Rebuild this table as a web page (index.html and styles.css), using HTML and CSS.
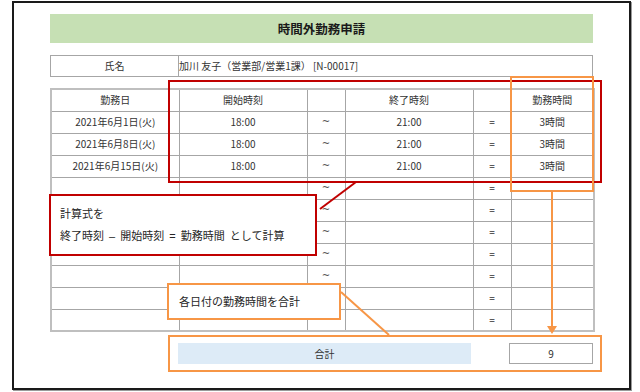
FILE: index.html
```html
<!DOCTYPE html>
<html lang="ja">
<head>
<meta charset="utf-8">
<link rel="stylesheet" href="styles.css">
</head>
<body>
<div class="frame">
  <div class="sheet">
    <div class="title">時間外勤務申請</div>
    <table class="name-table">
      <tr><td class="name-label">氏名</td><td class="name-value">加川 友子（営業部/営業1課） [N-00017]</td></tr>
    </table>
    <table class="grid">
      <colgroup><col class="c1"><col class="c2"><col class="c3"><col class="c4"><col class="c5"><col class="c6"></colgroup>
      <tr><td>勤務日</td><td>開始時刻</td><td></td><td>終了時刻</td><td></td><td>勤務時間</td></tr>
      <tr><td>2021年6月1日(火)</td><td>18:00</td><td class="tilde">~</td><td>21:00</td><td>=</td><td>3時間</td></tr>
      <tr><td>2021年6月8日(火)</td><td>18:00</td><td class="tilde">~</td><td>21:00</td><td>=</td><td>3時間</td></tr>
      <tr><td>2021年6月15日(火)</td><td>18:00</td><td class="tilde">~</td><td>21:00</td><td>=</td><td>3時間</td></tr>
      <tr><td></td><td></td><td class="tilde">~</td><td></td><td>=</td><td></td></tr>
      <tr><td></td><td></td><td class="tilde">~</td><td></td><td>=</td><td></td></tr>
      <tr><td></td><td></td><td class="tilde">~</td><td></td><td>=</td><td></td></tr>
      <tr><td></td><td></td><td class="tilde">~</td><td></td><td>=</td><td></td></tr>
      <tr><td></td><td></td><td class="tilde">~</td><td></td><td>=</td><td></td></tr>
      <tr><td></td><td></td><td class="tilde">~</td><td></td><td>=</td><td></td></tr>
      <tr><td></td><td></td><td class="tilde">~</td><td></td><td>=</td><td></td></tr>
    </table>
    <div class="total-row">
      <div class="total-spacer"></div>
      <div class="total-label">合計</div>
      <div class="total-gap"></div>
      <div class="total-value">9</div>
    </div>
  </div>
</div>

<div class="mark mark-red"></div>
<div class="mark mark-col"></div>
<div class="mark mark-total"></div>

<svg class="lines" width="640" height="392" viewBox="0 0 640 392">
  <line x1="320" y1="209" x2="356" y2="182" stroke="#c00000" stroke-width="2"/>
  <line x1="341" y1="292" x2="389" y2="335" stroke="#f79646" stroke-width="2"/>
  <line x1="552" y1="191" x2="552" y2="327" stroke="#f79646" stroke-width="2"/>
  <polygon points="547,326 557,326 552,334" fill="#f79646"/>
</svg>

<div class="callout callout-red">
  <p>計算式を</p>
  <p>終了時刻 – 開始時刻 = 勤務時間 として計算</p>
</div>
<div class="callout callout-orange">
  <p>各日付の勤務時間を合計</p>
</div>
</body>
</html>
```
FILE: styles.css
```css
html, body {
  margin: 0;
  padding: 0;
  background: #ffffff;
}
body {
  width: 640px;
  height: 392px;
  position: relative;
  overflow: hidden;
  font-family: "Noto Sans CJK JP", "Noto Sans", sans-serif;
  color: #333333;
}
.frame {
  box-sizing: border-box;
  margin: 1px 0 0 12px;
  width: 619px;
  height: 389px;
  border: 2px solid #1a1a1a;
  box-shadow: 1px 1px 0 #9a9a9a;
  padding: 11px 0 0 36px;
}
.sheet {
  width: 543px;
}
.title {
  height: 29px;
  background: #c6e0b4;
  font-weight: bold;
  font-size: 12.5px;
  line-height: 29px;
  text-align: center;
  color: #1a1a1a;
}
.name-table {
  margin-top: 12px;
  width: 543px;
  border-collapse: collapse;
  font-size: 10px;
}
.name-table td {
  height: 20px;
  padding: 0;
  border: 1px solid #a6a6a6;
  line-height: 20px;
}
.name-label {
  width: 127px;
  text-align: center;
}
.name-value {
  text-align: left;
  padding-left: 1px;
}
.grid {
  margin-top: 11px;
  width: 543px;
  border-collapse: collapse;
  table-layout: fixed;
  font-size: 10px;
  border: 2px solid #bfbfbf;
}
.c1, .c2, .c4 { width: 128px; }
.c3, .c5 { width: 38px; }
.c6 { width: 83px; }
.grid tr {
  height: 22px;
}
.grid td {
  padding: 0;
  border: 1px solid #a6a6a6;
  text-align: center;
  line-height: 20px;
  white-space: nowrap;
}
.grid td.tilde {
  color: #555555;
  font-family: "DejaVu Sans", sans-serif;
  font-size: 10px;
}
.total-row {
  display: flex;
  margin-top: 11px;
  height: 21px;
}
.total-spacer { width: 128px; }
.total-label {
  width: 294px;
  background: #ddebf7;
  font-size: 10px;
  line-height: 21px;
  text-align: center;
}
.total-gap { width: 38px; }
.total-value {
  box-sizing: border-box;
  width: 84px;
  border: 1px solid #a6a6a6;
  font-size: 10px;
  line-height: 19px;
  text-align: center;
}
.mark {
  position: absolute;
  box-sizing: border-box;
}
.mark-red {
  left: 168px;
  top: 80px;
  width: 434px;
  height: 103px;
  border: 2px solid #c00000;
}
.mark-col {
  left: 510px;
  top: 76px;
  width: 84px;
  height: 116px;
  border: 2px solid #f79646;
}
.mark-total {
  left: 168px;
  top: 335px;
  width: 434px;
  height: 37px;
  border: 2px solid #f79646;
}
.lines {
  position: absolute;
  left: 0;
  top: 0;
}
.callout {
  position: absolute;
  box-sizing: border-box;
  background: #ffffff;
  font-family: "Liberation Sans", "Noto Sans CJK JP", sans-serif;
  font-size: 11px;
  word-spacing: 2px;
  color: #262626;
}
.callout p {
  margin: 0;
  white-space: nowrap;
}
.callout-red {
  left: 49px;
  top: 194px;
  width: 268px;
  height: 62px;
  border: 2px solid #c00000;
  padding: 7px 0 0 9px;
  line-height: 22px;
}
.callout-orange {
  left: 167px;
  top: 283px;
  width: 174px;
  height: 37px;
  border: 2px solid #f79646;
  padding: 7px 0 0 10px;
  line-height: 20px;
}
```
